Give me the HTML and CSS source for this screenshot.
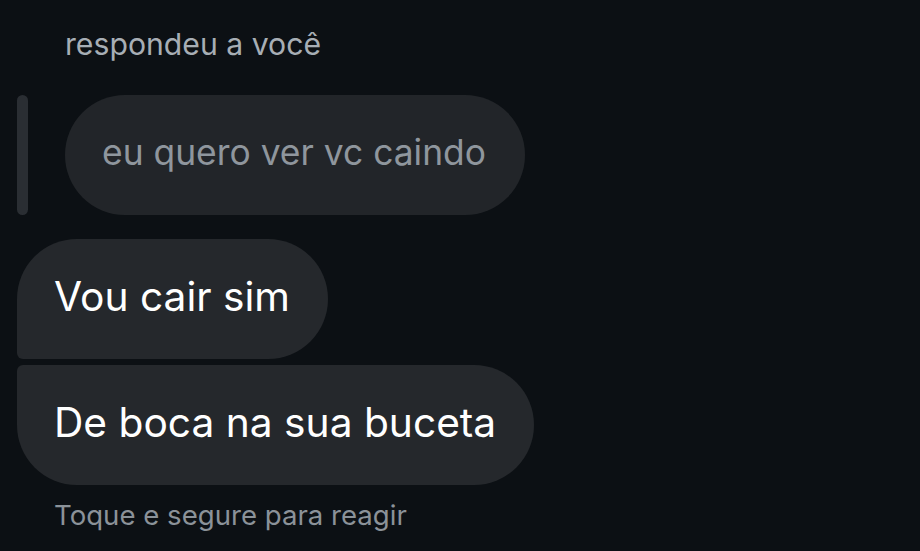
FILE: index.html
```html
<!DOCTYPE html>
<html lang="pt">
<head>
<meta charset="utf-8">
<link rel="stylesheet" href="styles.css">
</head>
<body>
<div class="thread">
  <div class="reply-label">respondeu a você</div>
  <div class="quote-row">
    <div class="quote-bar"></div>
    <div class="quote-bubble">eu quero ver vc caindo</div>
  </div>
  <div class="messages">
    <div class="bubble first">Vou cair sim</div>
    <div class="bubble last">De boca na sua buceta</div>
  </div>
  <div class="hint">Toque e segure para reagir</div>
</div>
</body>
</html>
```
FILE: styles.css
```css
html, body {
  margin: 0;
  padding: 0;
  background: #0c1014;
  width: 920px;
  height: 551px;
  overflow: hidden;
}
.thread {
  font-family: Inter, "Noto Sans", sans-serif;
  padding: 26px 0 0 17px;
  display: flex;
  flex-direction: column;
  align-items: flex-start;
}
.reply-label {
  margin-left: 48px;
  font-size: 30.2px;
  line-height: 36px;
  color: #a7aeb5;
}
.quote-row {
  margin-top: 33px;
  display: flex;
  align-items: stretch;
  gap: 37px;
}
.quote-bar {
  width: 11px;
  border-radius: 6px;
  background: #2a2e33;
}
.quote-bubble {
  height: 120px;
  box-sizing: border-box;
  padding: 0 39px 6px 37px;
  border-radius: 60px;
  background: #222529;
  color: #8f969d;
  font-size: 35.4px;
  display: flex;
  align-items: center;
}
.messages {
  margin-top: 24px;
  display: flex;
  flex-direction: column;
  align-items: flex-start;
  gap: 6px;
}
.bubble {
  height: 120px;
  box-sizing: border-box;
  padding: 0 38px 5px 37px;
  background: #25282c;
  color: #ffffff;
  font-size: 40.7px;
  display: flex;
  align-items: center;
}
.bubble.first {
  border-radius: 60px 60px 60px 6px;
}
.bubble.last {
  border-radius: 6px 60px 60px 60px;
}
.hint {
  margin-top: 13px;
  margin-left: 37px;
  font-size: 27.6px;
  line-height: 34px;
  color: #8b9299;
}
```
